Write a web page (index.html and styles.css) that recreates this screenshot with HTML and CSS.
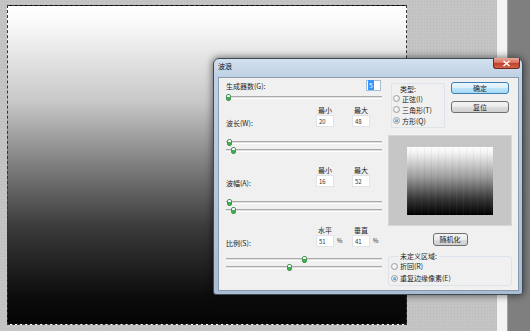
FILE: index.html
```html
<!DOCTYPE html>
<html lang="zh-CN">
<head>
    <meta charset="UTF-8">
    <title>波浪</title>
    <link rel="stylesheet" href="styles.css">
</head>
<body>

<div class="screen">
    <div class="workspace">
        <div class="canvas"></div>
    </div>
    <div class="scrollbar"></div>
    <div class="panel"></div>

    <div class="dialog">
        <div class="titlebar">
            <span class="title">波浪</span>
            <span class="close">
                <svg width="9" height="7" viewBox="0 0 9 7"><path d="M1.5 1 L7.5 6 M7.5 1 L1.5 6" stroke="#fff" stroke-width="1.6" fill="none"/></svg>
            </span>
        </div>

        <div class="client">
            <!-- 左侧：参数 -->
            <div class="left">
                <div class="gen-row">
                    <label>生成器数(G):</label>
                    <span class="gen-field"><span class="sel">5</span></span>
                </div>
                <div class="slider slider-gen"><span class="thumb" style="left:0px"></span></div>

                <div class="param">
                    <span class="head c2">最小</span>
                    <span class="head c4">最大</span>
                    <label class="param-label">波长(W):</label>
                    <input class="field c2" type="text" value="20">
                    <input class="field c4" type="text" value="48">
                </div>
                <div class="sliders">
                    <div class="slider"><span class="thumb" style="left:1px"></span></div>
                    <div class="slider"><span class="thumb" style="left:5px"></span></div>
                </div>

                <div class="param">
                    <span class="head c2">最小</span>
                    <span class="head c4">最大</span>
                    <label class="param-label">波幅(A):</label>
                    <input class="field c2" type="text" value="16">
                    <input class="field c4" type="text" value="52">
                </div>
                <div class="sliders">
                    <div class="slider"><span class="thumb" style="left:1px"></span></div>
                    <div class="slider"><span class="thumb" style="left:5px"></span></div>
                </div>

                <div class="param">
                    <span class="head c2">水平</span>
                    <span class="head c4">垂直</span>
                    <label class="param-label">比例(S):</label>
                    <input class="field c2" type="text" value="51">
                    <span class="pct c3">%</span>
                    <input class="field c4" type="text" value="41">
                    <span class="pct c5">%</span>
                </div>
                <div class="sliders tight">
                    <div class="slider"><span class="thumb" style="left:76px"></span></div>
                    <div class="slider"><span class="thumb" style="left:61px"></span></div>
                </div>
            </div>

            <!-- 右侧：类型、按钮、预览 -->
            <div class="right">
                <div class="type-row">
                    <div class="type-box">
                        <div class="type-label">类型:</div>
                        <div class="radio"><span class="dot"></span>正弦(I)</div>
                        <div class="radio"><span class="dot"></span>三角形(T)</div>
                        <div class="radio"><span class="dot on"></span>方形(Q)</div>
                    </div>
                    <div class="buttons">
                        <div class="btn btn-default">确定</div>
                        <div class="btn">复位</div>
                    </div>
                </div>

                <div class="preview">
                    <div class="preview-img"></div>
                </div>

                <div class="btn btn-random">随机化</div>

                <fieldset class="area">
                    <legend>未定义区域:</legend>
                    <div class="radio radio-area"><span class="dot"></span>折回(R)</div>
                    <div class="radio radio-area"><span class="dot on"></span>重复边缘像素(E)</div>
                </fieldset>
            </div>
        </div>
    </div>
</div>

</body>
</html>
```

FILE: styles.css
```css
body {
    margin: 0;
    font-family: "Noto Sans CJK SC", "Noto Sans", sans-serif;
    font-size: 7px;
    color: #1c1c1c;
}
.screen {
    position: relative;
    display: flex;
    width: 530px;
    height: 331px;
    overflow: hidden;
}

/* 画布区域 */
.workspace {
    width: 497px;
    box-sizing: border-box;
    padding: 5px 0 0 7px;
    background-color: #c4c4c4;
    background-image: radial-gradient(#b9b9b9 0.6px, transparent 0.8px);
    background-size: 3px 3px;
}
.canvas {
    width: 400px;
    height: 320px;
    box-sizing: border-box;
    border: 1px dashed #333;
    background: linear-gradient(to bottom, #fff 0%, #fafafa 5%, #c8c8c8 30%, #7e7e7e 50%, #393939 70%, #0b0b0b 92%, #050505 100%);
}
.scrollbar {
    width: 11px;
    box-sizing: border-box;
    background: #f3f3f3;
    border-right: 1px solid #a3a3a3;
}
.panel {
    flex: 1;
    background: #7f7f7f;
}

/* 对话框 */
.dialog {
    position: absolute;
    left: 213px;
    top: 58px;
    width: 310px;
    height: 237px;
    box-sizing: border-box;
    display: flex;
    flex-direction: column;
    padding: 0 3px 3px 4px;
    border: 1px solid #3f4a57;
    border-radius: 6px 6px 3px 3px;
    background: linear-gradient(to bottom, #d3e1ef 0, #bfd1e4 18px, #a9bdd2 100%);
    box-shadow: 0 0 7px 1px rgba(0, 0, 0, 0.5);
}
.titlebar {
    height: 18px;
    display: flex;
    align-items: flex-start;
}
.title {
    line-height: 15px;
    color: #111;
}
.close {
    margin: -1px -1px 0 auto;
    width: 27px;
    height: 11px;
    box-sizing: border-box;
    display: flex;
    align-items: center;
    justify-content: center;
    border: 1px solid #6d2a22;
    border-top: none;
    border-radius: 0 0 3px 3px;
    background: linear-gradient(to bottom, #e9a99c 0%, #d7725f 45%, #c2432c 55%, #d2624a 100%);
}
.client {
    flex: 1;
    display: grid;
    grid-template-columns: 156px 124px;
    column-gap: 6px;
    padding: 0 6px 0 7px;
    border: 1px solid #8a9bb0;
    background: #f0f0f0;
}

/* 左侧参数 */
.gen-row {
    display: flex;
    align-items: center;
    justify-content: space-between;
    height: 11px;
    margin-top: 2px;
}
.gen-field {
    width: 15px;
    height: 11px;
    margin-right: 1px;
    box-sizing: border-box;
    border: 1px solid #abbdd0;
    background: #fff;
    line-height: 9px;
    font-size: 6.5px;
    padding-left: 1px;
}
.sel {
    background: #3399ff;
    color: #fff;
    padding: 0 1px;
}
.slider {
    position: relative;
    height: 6px;
}
.slider::before {
    content: "";
    position: absolute;
    left: 0;
    right: 0;
    top: 2px;
    height: 1px;
    border-top: 1px solid #ababab;
    border-bottom: 1px solid #fff;
    background: #dedede;
}
.slider-gen {
    margin-top: 3px;
}
.thumb {
    position: absolute;
    top: 0;
    width: 5px;
    height: 7px;
    box-sizing: border-box;
    border: 1px solid #4b9457;
    border-radius: 2px;
    background: linear-gradient(to bottom, #fff 45%, #3cb04c 45%);
}
.param {
    display: grid;
    grid-template-columns: 90px 18px 18px 18px auto;
    grid-template-rows: 10px 12px;
    margin-top: 12px;
}
.slider-gen + .param {
    margin-top: 5px;
}
.head {
    grid-row: 1;
    text-align: center;
    line-height: 10px;
}
.param-label {
    grid-column: 1;
    grid-row: 2;
    padding-top: 2px;
    line-height: 12px;
}
.c2 { grid-column: 2; }
.c3 { grid-column: 3; }
.c4 { grid-column: 4; }
.c5 { grid-column: 5; }
.field {
    grid-row: 2;
    width: 18px;
    height: 12px;
    box-sizing: border-box;
    margin: 0;
    padding: 0 2px;
    border: 1px solid #e0e3e7;
    background: #fff;
    font-family: inherit;
    font-size: 6px;
    color: #333;
    outline: none;
}
.pct {
    grid-row: 2;
    padding-left: 3px;
    line-height: 12px;
    font-size: 6px;
}
.sliders {
    display: flex;
    flex-direction: column;
    gap: 2px;
    margin-top: 12px;
}
.sliders.tight {
    margin-top: 9px;
}

/* 右侧 */
.right {
    display: flex;
    flex-direction: column;
}
.type-row {
    display: flex;
    margin-top: 4px;
}
.type-box {
    width: 54px;
    margin: 1px 0 0 3px;
    padding: 2px 0 1px 1px;
    box-sizing: border-box;
    border: 1px solid #dde3ea;
    border-radius: 2px;
}
.type-label {
    line-height: 7px;
    padding-left: 7px;
}
.radio {
    display: flex;
    align-items: center;
    gap: 2px;
    height: 11px;
}
.radio-area {
    height: 12px;
}
.dot {
    position: relative;
    width: 7px;
    height: 7px;
    box-sizing: border-box;
    border: 1px solid #a0a0a0;
    border-radius: 50%;
    background: radial-gradient(circle at 40% 40%, #fff, #dadada);
}
.dot.on::after {
    content: "";
    position: absolute;
    inset: 1px;
    border-radius: 50%;
    background: radial-gradient(circle at 40% 40%, #8fd3ff, #1c63b3);
}
.buttons {
    width: 58px;
    margin: 0 3px 0 auto;
    display: flex;
    flex-direction: column;
    gap: 7px;
}
.btn {
    height: 12px;
    box-sizing: border-box;
    border: 1px solid #707070;
    border-radius: 3px;
    background: linear-gradient(to bottom, #f3f3f3 0%, #ebebeb 50%, #dddddd 50%, #cfcfcf 100%);
    text-align: center;
    line-height: 10px;
}
.btn-default {
    border-color: #3c7fb1;
    background: linear-gradient(to bottom, #eaf6fd 0%, #d9f0fc 50%, #bee6fd 50%, #a7d9f5 100%);
}
.preview {
    margin-top: 7px;
    height: 91px;
    box-sizing: border-box;
    border: 1px solid #d6d6d6;
    background: #c6c6c6;
    display: flex;
    align-items: center;
    justify-content: center;
}
.preview-img {
    width: 86px;
    height: 68px;
    background:
        repeating-linear-gradient(90deg, rgba(255, 255, 255, 0.04) 0 1px, transparent 1px 3px, rgba(0, 0, 0, 0.04) 3px 4px, transparent 4px 7px),
        linear-gradient(to bottom, #fff 0%, #f0f0f0 10%, #9a9a9a 45%, #3a3a3a 75%, #000 100%);
}
.btn-random {
    width: 35px;
    height: 13px;
    margin: 7px auto 0;
    line-height: 11px;
}
.area {
    margin: 7px 0 0;
    padding: 0 0 1px 2px;
    border: 1px solid #dde3ea;
    border-radius: 3px;
}
.area legend {
    margin-left: 7px;
    padding: 0 2px;
    line-height: 7px;
}
```
